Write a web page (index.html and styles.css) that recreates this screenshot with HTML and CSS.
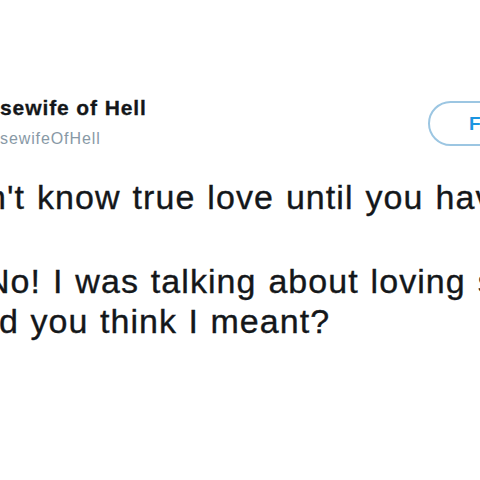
FILE: index.html
```html
<!DOCTYPE html>
<html>
<head>
<meta charset="utf-8">
<link rel="stylesheet" href="styles.css">
</head>
<body>
<div class="tweet">
  <div class="header">
    <div class="user">
      <div class="name">sewife of Hell</div>
      <div class="handle">sewifeOfHell</div>
    </div>
    <div class="follow">Follow</div>
  </div>
  <div class="text">
    <p class="para"><span class="line line-1">n't know true love until you have kids.</span></p>
    <p class="para">
      <span class="line line-2">No! I was talking about loving sleep.</span>
      <span class="line line-3">d you think I meant?</span>
    </p>
  </div>
</div>
</body>
</html>
```
FILE: styles.css
```css
html, body {
  margin: 0;
  padding: 0;
  background: #ffffff;
  overflow: hidden;
  width: 480px;
  height: 480px;
}

.tweet {
  font-family: "Liberation Sans", Arial, sans-serif;
  color: #14171a;
  padding-top: 96px;
  font-kerning: none;
}

.header {
  display: flex;
  justify-content: space-between;
  align-items: flex-start;
}

.user {
  display: flex;
  flex-direction: column;
}

.name {
  font-size: 21px;
  line-height: 24px;
  font-weight: 700;
  letter-spacing: 0.9px;
  white-space: nowrap;
  -webkit-text-stroke: 0.3px #14171a;
}

.handle {
  margin-top: 8px;
  font-size: 16px;
  line-height: 22px;
  color: #8899a6;
  letter-spacing: 0.9px;
  white-space: nowrap;
}

.follow {
  box-sizing: border-box;
  margin-top: 5px;
  margin-right: -88px;
  width: 140px;
  height: 45px;
  border: 2px solid #9cc6e2;
  border-radius: 23px;
  padding-left: 39px;
  display: flex;
  align-items: center;
  font-size: 19px;
  font-weight: 700;
  color: #1b95e0;
  white-space: nowrap;
  overflow: hidden;
}

.text {
  margin-top: 27px;
  font-size: 34px;
  line-height: 40px;
  letter-spacing: 1.05px;
  word-spacing: 1px;
  -webkit-text-stroke: 0.35px #14171a;
}

.para {
  margin: 0 0 44px 0;
}

.line {
  display: block;
  white-space: nowrap;
}

.line-1 {
  margin-left: -13px;
  word-spacing: 1.5px;
}

.line-2 {
  margin-left: -15px;
  word-spacing: 1.4px;
}

.line-3 {
  margin-left: -1px;
}
```
